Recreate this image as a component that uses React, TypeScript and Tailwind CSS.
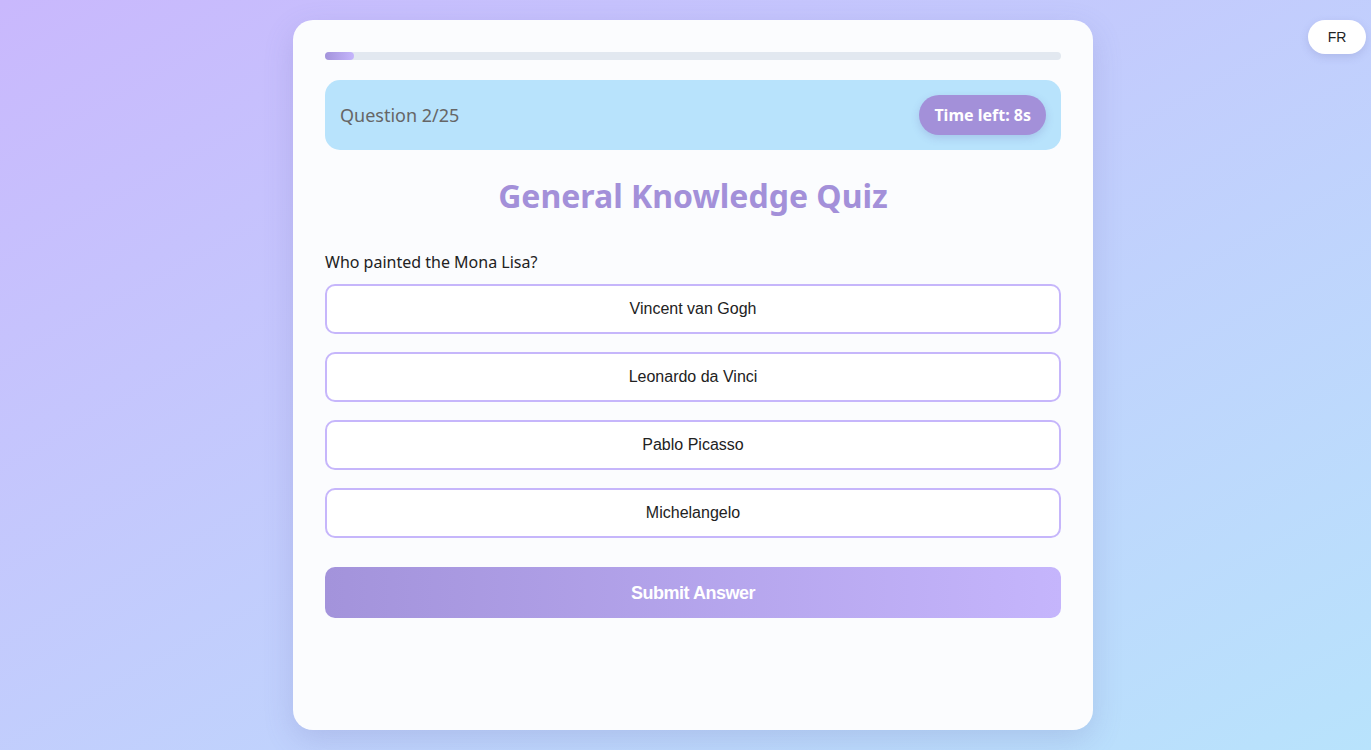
import { useState } from "react";

const options = ["Vincent van Gogh", "Leonardo da Vinci", "Pablo Picasso", "Michelangelo"];

export default function App() {
  const [selected, setSelected] = useState<number | null>(null);
  const progress = 4;

  return (
    <div className="relative min-h-[750px] w-full bg-gradient-to-br from-[#c9b8fd] to-[#b8e3fc] font-['Noto_Sans',sans-serif] pt-5 pl-[15px]">
      {/* Language toggle */}
      <button className="absolute right-[5px] top-5 h-[34px] w-[58px] rounded-full bg-white text-sm text-[#222] shadow-[0_3px_8px_rgba(100,100,160,0.2)] font-['Liberation_Sans',sans-serif]">
        FR
      </button>

      <div className="mx-auto flex h-[710px] w-[800px] flex-col rounded-[20px] bg-[#fbfcfe] p-8 shadow-[0_10px_30px_rgba(100,100,170,0.2)]">
        {/* Progress */}
        <div className="h-2 w-full rounded-full bg-[#e2e8f0]">
          <div className="h-2 rounded-full bg-gradient-to-r from-[#a393db] to-[#c5b5fc]" style={{ width: `${progress}%` }} />
        </div>

        {/* Header */}
        <div className="mt-5 flex h-[70px] items-center justify-between rounded-[15px] bg-[#b8e3fc] px-[15px]">
          <span className="text-lg text-[#666]">Question 2/25</span>
          <span className="flex h-10 items-center rounded-full bg-[#a390d9] px-[15px] text-base font-bold text-white shadow-[0_3px_8px_rgba(90,80,160,0.2)]">
            Time left: 8s
          </span>
        </div>

        <h1 className="mt-[26px] text-center text-[32px] font-bold leading-[40px] text-[#a390d9]">
          General Knowledge Quiz
        </h1>

        <p className="mt-[36px] text-base leading-5 text-[#222]">Who painted the Mona Lisa?</p>

        <div className="mt-[12px] flex flex-col gap-[18px]">
          {options.map((o, i) => (
            <button
              key={o}
              onClick={() => setSelected(i)}
              className={
                "h-[50px] w-full rounded-[10px] border-2 border-[#c6b6fb] text-base text-[#222] font-['Liberation_Sans',sans-serif] " +
                (selected === i ? "bg-[#efeaff]" : "bg-white")
              }
            >
              {o}
            </button>
          ))}
        </div>

        <button className="mt-[29px] h-[51px] w-full rounded-[10px] bg-gradient-to-r from-[#a393db] to-[#c5b5fc] text-lg font-bold tracking-[-0.5px] text-white font-['Liberation_Sans',sans-serif]">
          Submit Answer
        </button>
      </div>
    </div>
  );
}
